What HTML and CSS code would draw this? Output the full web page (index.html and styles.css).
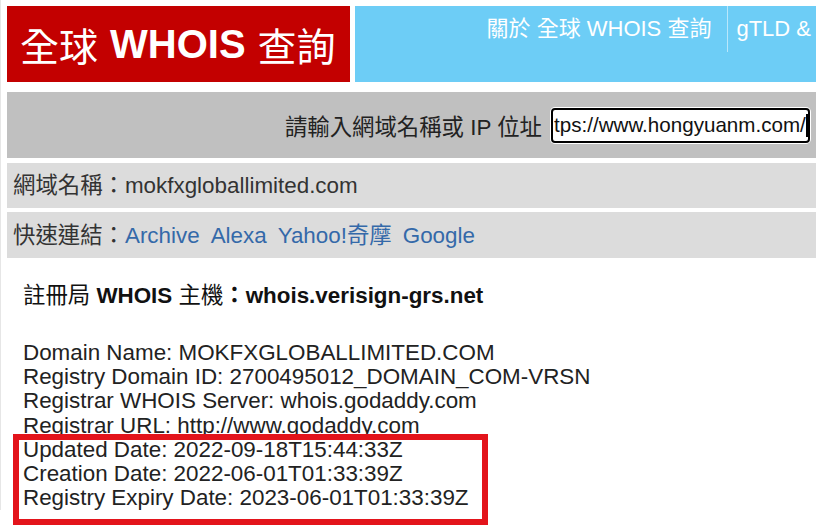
FILE: index.html
```html
<!DOCTYPE html>
<html lang="zh-Hant">
<head>
<meta charset="utf-8">
<title>全球 WHOIS 查詢</title>
<link rel="stylesheet" href="styles.css">
</head>
<body>
<div class="page">
  <header class="header">
    <div class="brand"><span class="cjk">全球</span><b>WHOIS</b><span class="cjk">查詢</span></div>
    <nav class="nav">
      <a class="nav-item" href="#">關於 全球 WHOIS 查詢</a>
      <a class="nav-item last" href="#">gTLD &amp;</a>
    </nav>
  </header>
  <form class="search">
    <label class="search-label" for="q">請輸入網域名稱或 IP 位址</label>
    <div class="input-box" id="q"><span class="input-text">tps://www.hongyuanm.com/</span><span class="caret"></span></div>
  </form>
  <div class="row">網域名稱：mokfxgloballimited.com</div>
  <div class="row links">快速連結：<a href="#">Archive</a><a href="#">Alexa</a><a href="#">Yahoo!奇摩</a><a href="#">Google</a></div>
  <div class="content">
    <div class="server"><span class="reg">註冊局</span> WHOIS <span class="reg">主機</span>：whois.verisign-grs.net</div>
    <div class="whois">
      <div>Domain Name: MOKFXGLOBALLIMITED.COM</div>
      <div>Registry Domain ID: 2700495012_DOMAIN_COM-VRSN</div>
      <div>Registrar WHOIS Server: whois.godaddy.com</div>
      <div>Registrar URL: http://www.godaddy.com</div>
      <div>Updated Date: 2022-09-18T15:44:33Z</div>
      <div>Creation Date: 2022-06-01T01:33:39Z</div>
      <div>Registry Expiry Date: 2023-06-01T01:33:39Z</div>
      <div class="highlight"></div>
    </div>
  </div>
</div>
</body>
</html>
```

FILE: styles.css
```css
* { box-sizing: border-box; }
html, body { margin: 0; padding: 0; background: #fff; }
body {
  font-family: "Liberation Sans", Arial, "Noto Sans CJK TC", sans-serif;
  font-size: 22.4px;
  color: #222;
  overflow: hidden;
  height: 528px;
}
.page {
  padding: 6px 0 0 6px;
  border-left: 1px solid #e6e6e6;
}
.header {
  display: flex;
  gap: 5px;
  height: 76px;
}
.brand {
  width: 343px;
  flex: none;
  background: #c30000;
  color: #fff;
  display: flex;
  align-items: center;
  gap: 12px;
  padding-left: 13px;
  white-space: nowrap;
}
.brand b { font-weight: bold; font-size: 40px; }
.brand .cjk { font-size: 39px; font-weight: normal; }
.nav {
  flex: 1;
  background: #6dcdf6;
  display: flex;
  justify-content: flex-end;
  align-items: flex-start;
  white-space: nowrap;
  overflow: hidden;
}
.nav-item {
  color: #fff;
  text-decoration: none;
  font-size: 22px;
  line-height: 46px;
  padding: 0 16px 0 0;
  border-right: 1px solid #b9e7fb;
}
.nav-item.last {
  border-right: 0;
  padding: 0 5px 0 8px;
}
.search {
  margin: 10px 0 0;
  height: 66px;
  background: #c0c0c0;
  display: flex;
  justify-content: flex-end;
  align-items: center;
  padding-right: 6px;
  gap: 9px;
}
.search-label { color: #222; }
.input-box {
  width: 259px;
  height: 35px;
  border: 2px solid #000;
  border-radius: 4px;
  background: #fff;
  box-shadow: 0 0 0 1px #fff;
  display: flex;
  align-items: center;
  padding-left: 1px;
  overflow: hidden;
  white-space: nowrap;
  color: #111;
  font-size: 20.6px;
}
.caret {
  display: inline-block;
  width: 2px;
  height: 23px;
  background: #000;
}
.row {
  margin-top: 5px;
  height: 45px;
  line-height: 45px;
  background: #dcdcdc;
  padding-left: 6px;
  color: #333;
  white-space: nowrap;
}
.row.links { margin-top: 4px; height: 46px; line-height: 48px; }
.links a {
  color: #3469a9;
  text-decoration: none;
  margin-right: 11px;
}
.content {
  padding-left: 16px;
}
.server {
  margin-top: 25px;
  font-weight: bold;
  color: #111;
  line-height: 26px;
}
.server .reg { font-weight: normal; }
.whois {
  position: relative;
  margin-top: 32px;
  line-height: 24.2px;
  color: #222;
}
.highlight {
  position: absolute;
  left: -10px;
  top: 93px;
  width: 475px;
  height: 91px;
  border: 6px solid #e3141b;
}
```
